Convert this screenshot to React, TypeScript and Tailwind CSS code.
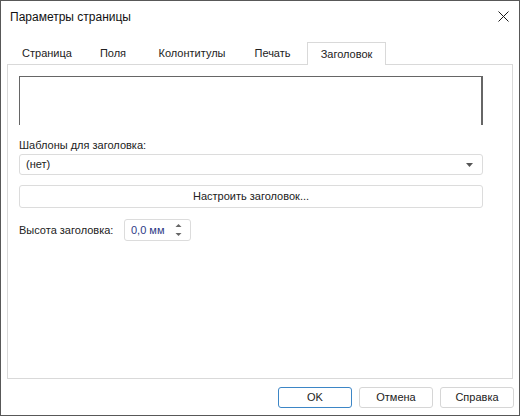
import React from "react";

const tabs = [
  { label: "Страница", w: "w-[66px]" },
  { label: "Поля", w: "w-[66px]" },
  { label: "Колонтитулы", w: "w-[92px]" },
  { label: "Печать", w: "w-[69px]" },
];

function CloseIcon() {
  return (
    <svg width="11" height="11" viewBox="0 0 11 11" className="block">
      <path d="M0.5 0.5 L10.5 10.5 M10.5 0.5 L0.5 10.5" stroke="#1a1a1a" strokeWidth="1" />
    </svg>
  );
}

function DialogButton({ children, primary }: { children: React.ReactNode; primary?: boolean }) {
  return (
    <div
      className={
        "w-[74px] h-[21px] flex items-center justify-center rounded-[3px] border bg-white text-[#222] " +
        (primary ? "border-[#3d86c6]" : "border-[#d6d6d6]")
      }
    >
      {children}
    </div>
  );
}

export default function App() {
  return (
    <div className="w-[520px] h-[416px] box-border border border-[#585858] bg-white flex flex-col font-['Liberation_Sans',Arial,sans-serif] text-[11px] text-[#222] select-none whitespace-nowrap">
      {/* title bar */}
      <div className="h-[31px] flex items-center justify-between pl-[9px] pr-[10px]">
        <span className="text-[12px] text-[#111] pt-[1px]">Параметры страницы</span>
        <CloseIcon />
      </div>

      {/* tabs */}
      <div className="h-[32px] flex items-end pl-[13px]">
        {tabs.map((t) => (
          <div key={t.label} className={t.w + " h-[21px] flex items-center justify-center"}>
            {t.label}
          </div>
        ))}
        <div className="w-[79px] h-[23px] -mb-px relative z-10 bg-white border border-b-0 border-[#d9d9d9] flex items-center justify-center">
          Заголовок
        </div>
      </div>

      {/* panel */}
      <div className="mx-[6px] h-[315px] box-border border border-[#d9d9d9] pl-[11px] pt-[11px] flex flex-col">
        <div className="w-[464px] h-[49px] box-border border-t border-l border-r-2 border-[#666]" />

        <div className="mt-[12px] h-[16px] leading-[16px]">Шаблоны для заголовка:</div>
        <div className="mt-[1px] w-[464px] h-[21px] box-border border border-[#dcdcdc] rounded-[3px] flex items-center justify-between pl-[6px] pr-[9px]">
          <span>(нет)</span>
          <svg width="7" height="4" viewBox="0 0 7 4">
            <path d="M0 0 H7 L3.5 4 Z" fill="#555" />
          </svg>
        </div>

        <div className="mt-[10px] w-[464px] h-[23px] box-border border border-[#dcdcdc] rounded-[3px] flex items-center justify-center">
          Настроить заголовок...
        </div>

        <div className="mt-[11px] flex items-center">
          <span className="w-[105px] shrink-0">Высота заголовка:</span>
          <div className="w-[67px] h-[22px] box-border border border-[#dcdcdc] rounded-[3px] flex items-center justify-between pl-[6px] pr-[8px]">
            <span className="text-[#2e3a86]">0,0 мм</span>
            <svg width="7" height="14" viewBox="0 0 7 14">
              <path d="M0.5 4 L3.5 1 L6.5 4 Z" fill="#666" />
              <path d="M0.5 10 L3.5 13 L6.5 10 Z" fill="#666" />
            </svg>
          </div>
        </div>
      </div>

      {/* footer */}
      <div className="flex-1 flex justify-end items-start pt-[8px] pr-[5px] gap-[7px]">
        <DialogButton primary>OK</DialogButton>
        <DialogButton>Отмена</DialogButton>
        <DialogButton>Справка</DialogButton>
      </div>
    </div>
  );
}
